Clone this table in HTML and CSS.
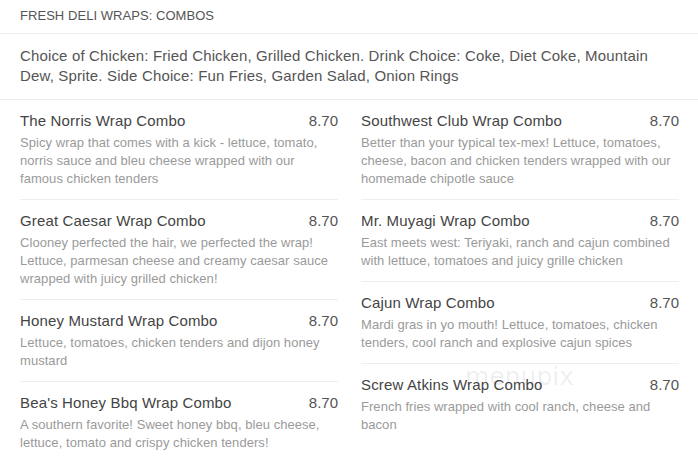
FILE: index.html
```html
<!DOCTYPE html>
<html>
<head>
<meta charset="utf-8">
<link rel="stylesheet" href="styles.css">
</head>
<body>
<div class="page">
  <div class="section-title">FRESH DELI WRAPS: COMBOS</div>
  <div class="intro">Choice of Chicken: Fried Chicken, Grilled Chicken. Drink Choice: Coke, Diet Coke, Mountain Dew, Sprite. Side Choice: Fun Fries, Garden Salad, Onion Rings</div>
  <div class="grid">
    <div class="col">
      <div class="item">
        <div class="row"><span class="name">The Norris Wrap Combo</span><span class="price">8.70</span></div>
        <div class="desc">Spicy wrap that comes with a kick - lettuce, tomato, norris sauce and bleu cheese wrapped with our famous chicken tenders</div>
      </div>
      <div class="item">
        <div class="row"><span class="name">Great Caesar Wrap Combo</span><span class="price">8.70</span></div>
        <div class="desc">Clooney perfected the hair, we perfected the wrap! Lettuce, parmesan cheese and creamy caesar sauce wrapped with juicy grilled chicken!</div>
      </div>
      <div class="item">
        <div class="row"><span class="name">Honey Mustard Wrap Combo</span><span class="price">8.70</span></div>
        <div class="desc">Lettuce, tomatoes, chicken tenders and dijon honey mustard</div>
      </div>
      <div class="item">
        <div class="row"><span class="name">Bea's Honey Bbq Wrap Combo</span><span class="price">8.70</span></div>
        <div class="desc">A southern favorite! Sweet honey bbq, bleu cheese, lettuce, tomato and crispy chicken tenders!</div>
      </div>
    </div>
    <div class="col">
      <div class="item">
        <div class="row"><span class="name">Southwest Club Wrap Combo</span><span class="price">8.70</span></div>
        <div class="desc">Better than your typical tex-mex! Lettuce, tomatoes, cheese, bacon and chicken tenders wrapped with our homemade chipotle sauce</div>
      </div>
      <div class="item">
        <div class="row"><span class="name">Mr. Muyagi Wrap Combo</span><span class="price">8.70</span></div>
        <div class="desc">East meets west: Teriyaki, ranch and cajun combined with lettuce, tomatoes and juicy grille chicken</div>
      </div>
      <div class="item">
        <div class="row"><span class="name">Cajun Wrap Combo</span><span class="price">8.70</span></div>
        <div class="desc">Mardi gras in yo mouth! Lettuce, tomatoes, chicken tenders, cool ranch and explosive cajun spices</div>
      </div>
      <div class="item">
        <div class="row"><span class="name">Screw Atkins Wrap Combo</span><span class="price">8.70</span></div>
        <div class="desc">French fries wrapped with cool ranch, cheese and bacon</div>
      </div>
    </div>
  </div>
  <div class="watermark">menupix</div>
</div>
</body>
</html>
```

FILE: styles.css
```css
* { box-sizing: border-box; }
html, body { margin: 0; padding: 0; background: #fff; }
body { font-family: "Liberation Sans", Arial, sans-serif; }
.page { position: relative; width: 698px; height: 460px; overflow: hidden; }
.section-title {
  font-size: 13px; line-height: 15px; color: #555;
  letter-spacing: 0.05px;
  padding: 8px 20px 10px; height: 34px;
  border-bottom: 1px solid #eee;
}
.intro {
  font-size: 15px; line-height: 20px; color: #555;
  letter-spacing: 0.15px;
  padding: 12px 20px 13px;
  border-bottom: 1px solid #eee;
}
.grid {
  display: grid;
  grid-template-columns: 318px 318px;
  column-gap: 23px;
  padding: 0 19px 0 20px;
}
.item {
  padding: 11px 0 11px;
  border-bottom: 1px solid #eee;
}
.item:last-child { border-bottom: none; }
.row {
  display: flex; justify-content: space-between;
  font-size: 15px; line-height: 20px; color: #444;
  letter-spacing: 0.15px;
}
.price { color: #555; letter-spacing: 0; }
.desc {
  margin-top: 3px;
  font-size: 13px; line-height: 18px; color: #9a9a9a;
  letter-spacing: 0.05px;
}
.watermark {
  position: absolute; left: 465px; top: 364px;
  font-size: 25px; line-height: 25px; color: rgba(0,0,0,0.08);
  font-family: "DejaVu Sans", sans-serif;
}
```
